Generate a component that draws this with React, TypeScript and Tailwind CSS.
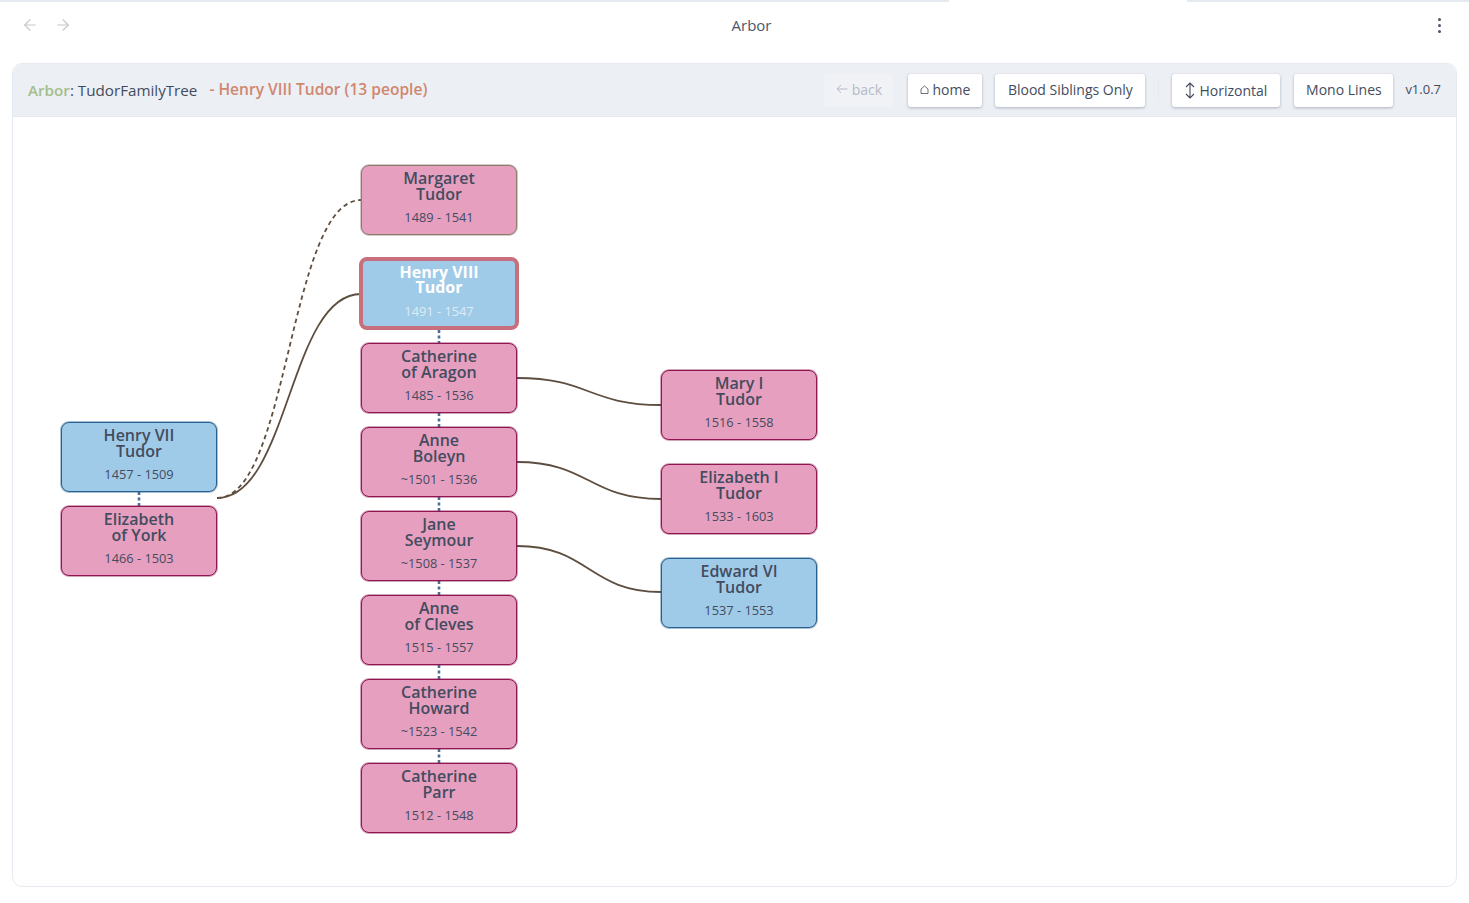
import { ArrowLeft, ArrowRight } from "lucide-react";

type Person = {
  first: string;
  last: string;
  dates: string;
  x: number;
  y: number;
  sex: "m" | "f";
  faded?: boolean;
  active?: boolean;
};

// positions are taken relative to the tree canvas
const PEOPLE: Person[] = [
  { first: "Henry VII", last: "Tudor", dates: "1457 - 1509", x: 48, y: 305, sex: "m" },
  { first: "Elizabeth", last: "of York", dates: "1466 - 1503", x: 48, y: 389, sex: "f" },
  { first: "Margaret", last: "Tudor", dates: "1489 - 1541", x: 348, y: 48, sex: "f", faded: true },
  { first: "Henry VIII", last: "Tudor", dates: "1491 - 1547", x: 346, y: 140, sex: "m", active: true },
  { first: "Catherine", last: "of Aragon", dates: "1485 - 1536", x: 348, y: 226, sex: "f" },
  { first: "Anne", last: "Boleyn", dates: "~1501 - 1536", x: 348, y: 310, sex: "f" },
  { first: "Jane", last: "Seymour", dates: "~1508 - 1537", x: 348, y: 394, sex: "f" },
  { first: "Anne", last: "of Cleves", dates: "1515 - 1557", x: 348, y: 478, sex: "f" },
  { first: "Catherine", last: "Howard", dates: "~1523 - 1542", x: 348, y: 562, sex: "f" },
  { first: "Catherine", last: "Parr", dates: "1512 - 1548", x: 348, y: 646, sex: "f" },
  { first: "Mary I", last: "Tudor", dates: "1516 - 1558", x: 648, y: 253, sex: "f" },
  { first: "Elizabeth I", last: "Tudor", dates: "1533 - 1603", x: 648, y: 347, sex: "f" },
  { first: "Edward VI", last: "Tudor", dates: "1537 - 1553", x: 648, y: 441, sex: "m" },
];

const curve = (x1: number, y1: number, x2: number, y2: number) => {
  const mid = (x1 + x2) / 2;
  return `M${x1},${y1} C${mid},${y1} ${mid},${y2} ${x2},${y2}`;
};

const SOLID_LINKS = [
  curve(204, 381, 348, 177),
  curve(504, 261, 648, 288),
  curve(504, 345, 648, 382),
  curve(504, 429, 648, 475),
];

const DOTTED_LINKS = [
  "M426,213 V226",
  "M426,296 V310",
  "M426,380 V394",
  "M426,464 V478",
  "M426,548 V562",
  "M426,632 V646",
  "M126,375 V389",
];

function PersonNode({ person }: { person: Person }) {
  // the soft ring stands in for the half pixel of the original 1.5px stroke
  let box =
    "h-[70px] w-[156px] border bg-[#e79fc0] border-[#8f1650] text-[#434c5e] shadow-[0_0_0_1px_rgba(143,22,80,0.4)]";
  if (person.sex === "m")
    box = "h-[70px] w-[156px] border bg-[#a0cbe8] border-[#27618f] text-[#434c5e] shadow-[0_0_0_1px_rgba(39,97,143,0.4)]";
  if (person.faded)
    box = "h-[70px] w-[156px] border bg-[#e79fc0] border-[#8c7b6e] text-[#434c5e] shadow-[0_0_0_1px_rgba(140,123,110,0.4)]";
  if (person.active) box = "h-[73px] w-[160px] border-4 bg-[#a0cbe8] border-[#c76f7c] text-white";

  return (
    <div
      className={`absolute flex flex-col items-center rounded-[8px] text-center ${box}`}
      style={{ left: person.x, top: person.y }}
    >
      <div className={`text-[16px] leading-[15.5px] ${person.active ? "mt-[3.5px] font-bold" : "mt-[5px] font-semibold"}`}>
        <div>{person.first}</div>
        <div>{person.last}</div>
      </div>
      <div className={`text-[12.8px] leading-[17px] ${person.active ? "mt-[7px] text-[#dcebf6]" : "mt-[7px]"}`}>
        {person.dates}
      </div>
    </div>
  );
}

function ToolButton({
  children,
  disabled,
  width,
}: {
  children: React.ReactNode;
  disabled?: boolean;
  width: string;
}) {
  return (
    <button
      className={`flex h-[33px] items-center justify-center rounded-[3px] pb-[2px] text-[14px] ${width} ${
        disabled ? "bg-[#f0f2f6] text-[#b4bac6]" : "bg-white text-[#434c5e] shadow-[0_1px_3px_rgba(76,86,106,0.4)]"
      }`}
    >
      {children}
    </button>
  );
}

export default function App() {
  return (
    <div className="relative h-[903px] w-[1469px] overflow-hidden bg-white font-['Open_Sans',sans-serif] text-[#434c5e]">
      {/* window chrome */}
      <div className="flex h-[2px]">
        <div className="w-[949px] bg-[#e5e9f0]" />
        <div className="w-[238px]" />
        <div className="flex-1 bg-[#e5e9f0]" />
      </div>
      <div className="flex h-[61px] items-start justify-between pt-[14px] pl-[21px] pr-[20px]">
        <div className="flex gap-[15px] text-[#c8c8c8]">
          <ArrowLeft size={18} strokeWidth={1.5} />
          <ArrowRight size={18} strokeWidth={1.5} />
        </div>
        <div className="mt-[-2px] text-[15px] text-[#4c566a]">Arbor</div>
        <div className="mt-[1px] flex w-[18px] flex-col items-center gap-[3px] pt-[1px]">
          <span className="h-[3px] w-[3px] rounded-full bg-[#4c566a]" />
          <span className="h-[3px] w-[3px] rounded-full bg-[#4c566a]" />
          <span className="h-[3px] w-[3px] rounded-full bg-[#4c566a]" />
        </div>
      </div>

      <div className="mx-[12px] h-[824px] w-[1445px] overflow-hidden rounded-[10px] border border-[#e5e9f0]">
        <header className="flex h-[53px] items-center border-b border-[#e5e9f0] bg-[#eceff4] pl-[15px] pr-[15px]">
          <div className="text-[15.2px]">
            <span className="font-semibold text-[#a3be8c]">Arbor</span>: TudorFamilyTree
          </div>
          <div className="ml-[12px] text-[15.55px] font-semibold text-[#d08770]">- Henry VIII Tudor (13 people)</div>
          <div className="ml-auto flex items-center">
            <ToolButton disabled width="w-[69px]">
              <svg width="12" height="10" viewBox="0 0 12 10" fill="none" stroke="currentColor" className="mr-[4px]">
                <path d="M11.5 5 H1 M5 1 L1 5 L5 9" />
              </svg>
              back
            </ToolButton>
            <div className="ml-[15px]">
              <ToolButton width="w-[74px]">
                <svg width="9" height="9" viewBox="0 0 9 9" fill="none" stroke="currentColor" strokeWidth="0.8" className="mr-[3px]">
                  <path d="M1 8.5 H8 V4 L4.5 1 L1 4 Z" />
                </svg>
                home
              </ToolButton>
            </div>
            <div className="ml-[13px]">
              <ToolButton width="w-[150px]">Blood Siblings Only</ToolButton>
            </div>
            <div className="ml-[13px] mr-[13px] h-[22px] w-px bg-[#e5e9f0]" />
            <ToolButton width="w-[108px]">
              <svg width="10" height="17" viewBox="0 0 10 17" fill="none" stroke="currentColor" strokeWidth="1.1" className="mr-[4px] mt-[3px]">
                <path d="M5 1 V16 M1 5 L5 1 L9 5 M1 12 L5 16 L9 12" />
              </svg>
              <span className="mt-[2px]">Horizontal</span>
            </ToolButton>
            <div className="ml-[14px]">
              <ToolButton width="w-[99px]">Mono Lines</ToolButton>
            </div>
            <div className="ml-[12px] pb-[1px] text-[13px]">v1.0.7</div>
          </div>
        </header>

        <div className="relative h-[769px]">
          <svg className="absolute inset-0 h-full w-full" fill="none">
            {SOLID_LINKS.map((d) => (
              <path key={d} d={d} stroke="#5d4e3f" strokeWidth={1.8} />
            ))}
            <path d={curve(204, 381, 348, 83)} stroke="#5d4e3f" strokeWidth={1.8} strokeDasharray="4.5 3.5" />
            {DOTTED_LINKS.map((d) => (
              <path key={d} d={d} stroke="#4a6f96" strokeWidth={2.6} strokeDasharray="3 2.5" />
            ))}
          </svg>
          {PEOPLE.map((p) => (
            <PersonNode key={p.first + p.last + p.dates} person={p} />
          ))}
        </div>
      </div>
    </div>
  );
}
